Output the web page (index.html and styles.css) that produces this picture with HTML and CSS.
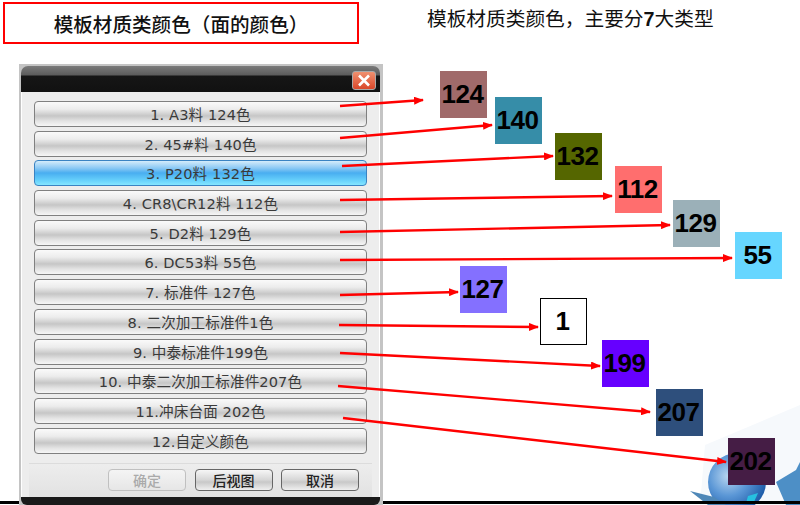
FILE: index.html
```html
<!DOCTYPE html>
<html lang="zh">
<head>
<meta charset="utf-8">
<title>模板材质类颜色</title>
<link rel="stylesheet" href="styles.css">
</head>
<body>
<main class="slide">
  <svg class="decor" width="800" height="505" viewBox="0 0 800 505">
    <defs>
      <radialGradient id="globe" cx="0.35" cy="0.4" r="0.75">
        <stop offset="0" stop-color="#b9d6f0"/>
        <stop offset="0.45" stop-color="#5b97d6"/>
        <stop offset="1" stop-color="#0f4f9f"/>
      </radialGradient>
    </defs>
    <path d="M705 445 L800 405 L800 505 L700 505 Z" fill="#f6f9fc"/>
    <circle cx="737" cy="482" r="29" fill="url(#globe)"/>
    <path d="M690 491 L714 497 L726 505 L708 505 Z" fill="#4f88b8"/>
    <path d="M776 482 L796 470 L800 462 L800 505 L786 505 Z" fill="#4d8fc6"/>
    <path d="M748 496 L758 493 L754 502 L746 503 Z" fill="#27c0e0"/>
    <rect class="rule" x="0" y="501" width="800" height="3"/>
  </svg>

  <h1 class="title">模板材质类颜色（面的颜色）</h1>
  <p class="subtitle">模板材质类颜色，主要分<b>7</b>大类型</p>

  <section class="dialog">
    <header class="dialog-bar">
      <span class="close"><svg width="20" height="15" viewBox="0 0 20 15"><path d="M5 2.5 L15 12.5 M15 2.5 L5 12.5" stroke="#fff" stroke-width="2.6"/></svg></span>
    </header>
    <div class="dialog-body">
      <div class="list">
        <button class="item">1. A3料 124色</button>
        <button class="item">2. 45#料 140色</button>
        <button class="item active">3. P20料 132色</button>
        <button class="item">4. CR8\CR12料 112色</button>
        <button class="item">5. D2料 129色</button>
        <button class="item">6. DC53料 55色</button>
        <button class="item">7. 标准件 127色</button>
        <button class="item">8. 二次加工标准件1色</button>
        <button class="item">9. 中泰标准件199色</button>
        <button class="item">10. 中泰二次加工标准件207色</button>
        <button class="item">11.冲床台面 202色</button>
        <button class="item">12.自定义颜色</button>
      </div>
      <footer class="actions">
        <button class="action disabled">确定</button>
        <button class="action">后视图</button>
        <button class="action">取消</button>
      </footer>
    </div>
    <div class="dialog-foot"></div>
  </section>

  <div class="swatch s1">124</div>
  <div class="swatch s2">140</div>
  <div class="swatch s3">132</div>
  <div class="swatch s4">112</div>
  <div class="swatch s5">129</div>
  <div class="swatch s6">55</div>
  <div class="swatch s7">127</div>
  <div class="swatch s8">1</div>
  <div class="swatch s9">199</div>
  <div class="swatch s10">207</div>
  <div class="swatch s11">202</div>

  <svg class="arrows" width="800" height="505" viewBox="0 0 800 505">
    <defs>
      <marker id="head" markerUnits="userSpaceOnUse" markerWidth="10" markerHeight="8" refX="9" refY="4" orient="auto">
        <path d="M0 0 L10 4 L0 8 Z" fill="#f00"/>
      </marker>
    </defs>
    <g class="arrow-lines">
      <line x1="340" y1="106" x2="423" y2="100" marker-end="url(#head)"/>
      <line x1="340" y1="138" x2="492" y2="125" marker-end="url(#head)"/>
      <line x1="342" y1="166" x2="553" y2="156" marker-end="url(#head)"/>
      <line x1="340" y1="200" x2="612" y2="196" marker-end="url(#head)"/>
      <line x1="340" y1="232" x2="670" y2="225" marker-end="url(#head)"/>
      <line x1="340" y1="260" x2="732" y2="258" marker-end="url(#head)"/>
      <line x1="340" y1="295" x2="458" y2="292" marker-end="url(#head)"/>
      <line x1="339" y1="325" x2="538" y2="327" marker-end="url(#head)"/>
      <line x1="340" y1="353" x2="600" y2="366" marker-end="url(#head)"/>
      <line x1="338" y1="386" x2="650" y2="412" marker-end="url(#head)"/>
      <line x1="343" y1="418" x2="726" y2="462" marker-end="url(#head)"/>
    </g>
  </svg>
</main>
</body>
</html>
```

FILE: styles.css
```css
* { box-sizing: border-box; }
html, body { margin: 0; padding: 0; background: #fff; }
body { font-family: "Liberation Sans", "Noto Sans CJK SC", sans-serif; text-spacing-trim: space-all; }

.slide { position: relative; width: 800px; height: 505px; overflow: hidden; background: #fff; }
.decor, .arrows { position: absolute; left: 0; top: 0; }
.rule { fill: #000; }
.arrow-lines line { stroke: #f00; stroke-width: 2.4; }

.title {
  position: absolute; left: 3px; top: 2px; width: 356px; height: 42px; margin: 0;
  display: flex; align-items: center; justify-content: center;
  border: 2px solid #f00;
  font-size: 19.6px; font-weight: 500; color: #111;
}
.subtitle {
  position: absolute; left: 427px; top: 8px; margin: 0;
  font-size: 19.7px; line-height: 22px; color: #111;
  white-space: nowrap;
}

.dialog {
  position: absolute; left: 19px; top: 64px; width: 364px; height: 441px;
  padding: 2px 3px 0 2px; background: #c4c4c4;
  display: flex; flex-direction: column;
}
.dialog-bar {
  height: 26px; flex: none; border-radius: 7px 7px 0 0;
  background: linear-gradient(#7a7a7a 0, #5c5c5c 9px, #161616 10px, #111 100%);
  position: relative;
}
.close {
  position: absolute; right: 4px; top: 5px; width: 24px; height: 19px;
  display: flex; align-items: center; justify-content: center;
  border-radius: 3px; border: 1px solid #a8a8a8;
  background: linear-gradient(#f0906f, #d9472a);
}
.dialog-body {
  flex: 1; background: #ededed; border-left: 1px solid #fff; border-right: 1px solid #fff;
  padding: 9px 12px 0 12px; display: flex; flex-direction: column;
}
.list { display: flex; flex-direction: column; gap: 3.7px; }
.item {
  height: 26px; padding: 0 0 1px; flex: none;
  border: 1px solid #808080; border-radius: 4px;
  background: linear-gradient(#fafafa 0, #ececec 30%, #c6c6c6 58%, #e4e4e4 80%, #f6f6f6 100%);
  font-family: "DejaVu Sans", "Noto Sans CJK SC", sans-serif;
  font-size: 14.6px; color: #3a3a3a; letter-spacing: 0.1px; white-space: nowrap;
}
.item.active {
  border-color: #3a83c2;
  background: linear-gradient(#d4ecfb 0, #8ac8f4 30%, #49aef0 50%, #66d0fb 80%, #84e6ff 100%);
}
.actions {
  margin: 9px -5px 0 -5px; padding: 5px 13px 0 0; height: 34px;
  border-top: 1px solid #dcdcdc;
  display: flex; justify-content: flex-end; gap: 8.5px;
  background: linear-gradient(#ededed, #e2e2e2);
}
.action {
  width: 78px; height: 22px; padding: 0; flex: none;
  border: 1px solid #666; border-radius: 4px;
  background: linear-gradient(#f6f6f6 0, #d6d6d6 50%, #c8c8c8 60%, #efefef 100%);
  font-family: "Noto Sans CJK SC", sans-serif; font-size: 14px; font-weight: 500; color: #222;
}
.action.disabled { color: #aaa; border-color: #c0c0c0; background: linear-gradient(#f4f4f4, #e6e6e6); }
.dialog-foot { height: 8px; flex: none; background: #1a1a1a; border-radius: 0 0 6px 6px; }

.swatch {
  position: absolute; width: 47px; height: 47px; padding-right: 2px;
  display: flex; align-items: center; justify-content: center;
  font-size: 26px; font-weight: 700; color: #000; letter-spacing: -0.5px;
}
.s1 { left: 440px; top: 71px; background: #a06a6a; }
.s2 { left: 495px; top: 97px; background: #368da8; }
.s3 { left: 555px; top: 133px; background: #556600; }
.s4 { left: 615px; top: 166px; background: #ff6e6e; }
.s5 { left: 673px; top: 200px; background: #9bb0b8; }
.s6 { left: 735px; top: 232px; background: #66d6ff; }
.s7 { left: 460px; top: 266px; background: #8470ff; }
.s8 { left: 540px; top: 298px; background: #fff; border: 1px solid #000; }
.s9 { left: 602px; top: 340px; background: #6600ff; }
.s10 { left: 656px; top: 389px; background: #2e4f7c; }
.s11 { left: 728px; top: 438px; background: #451d45; }
```
